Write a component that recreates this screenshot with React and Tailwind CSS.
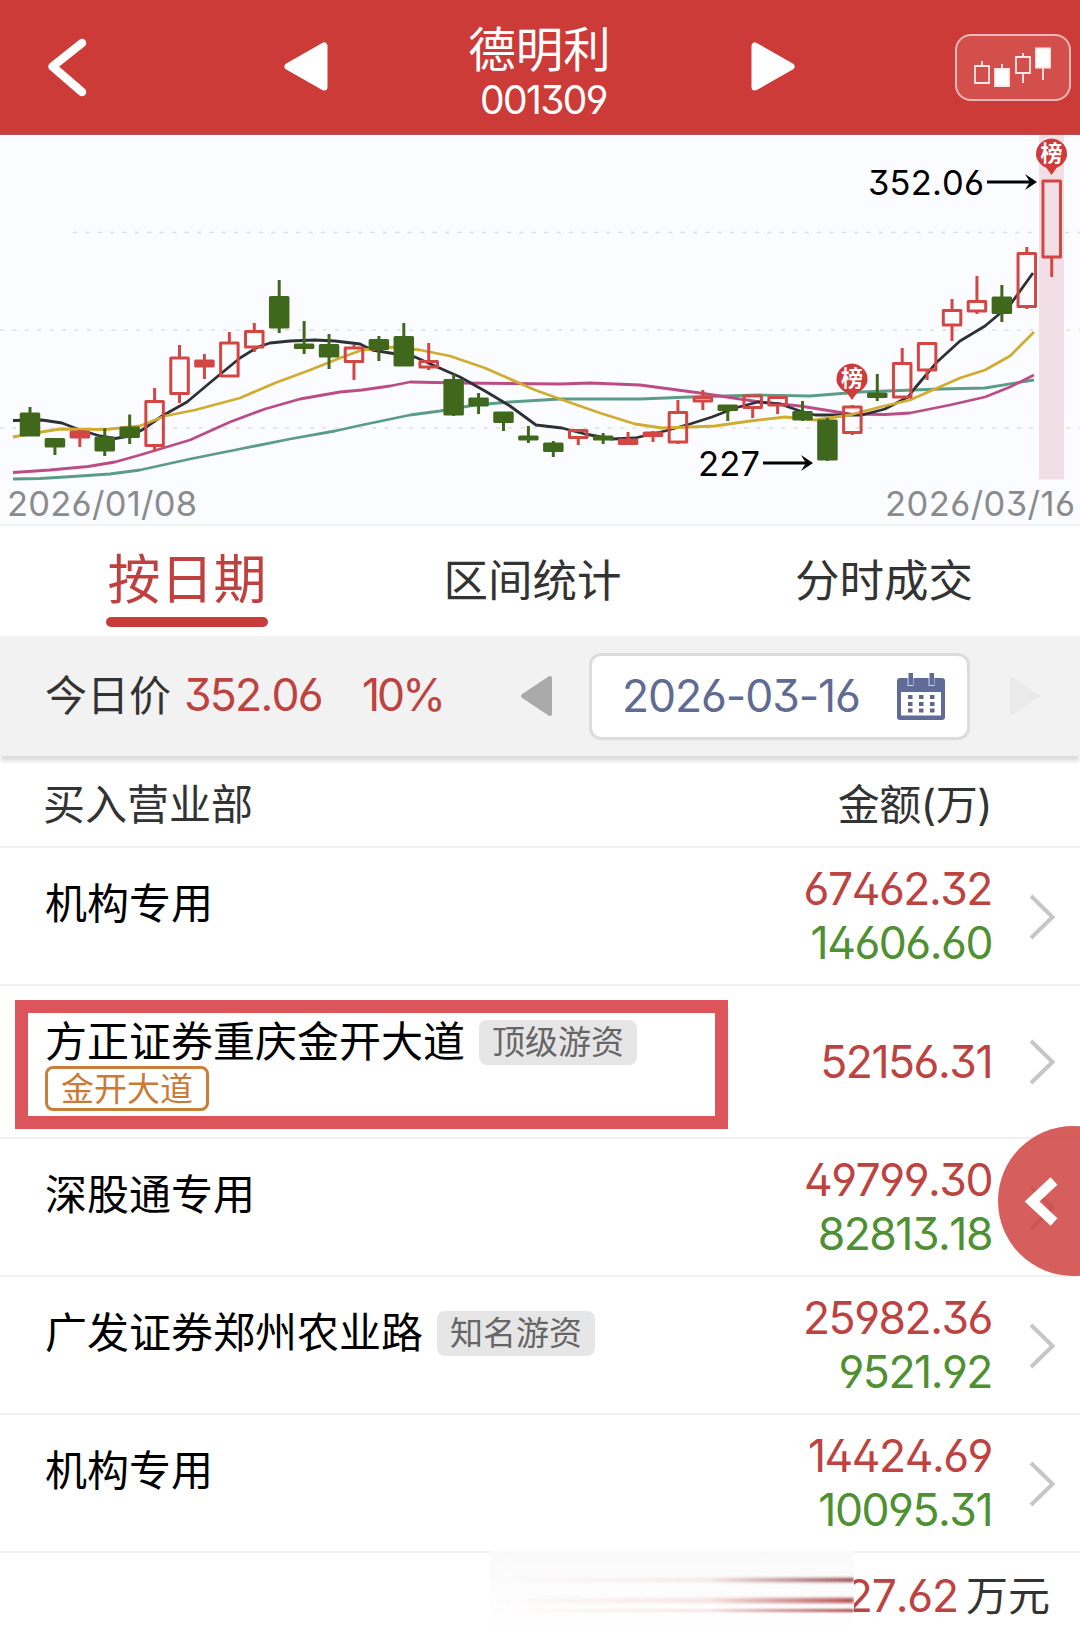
import React from "react";
import clsx from "clsx";

// high, open/close top, open/close bottom, low, type (g = down, r = up hollow, f = up filled)
const candles = [
  [407, 413, 435, 435, "g"],
  [438, 438.5, 446, 455, "g"],
  [430, 431, 437, 447, "f"],
  [428, 437, 450, 456, "g"],
  [414.5, 427, 436.5, 444, "g"],
  [388, 400.5, 445.5, 451, "r"],
  [345, 357, 393.5, 403, "r"],
  [354, 360, 366, 379, "f"],
  [332, 342, 376, 376, "r"],
  [323, 330.5, 347, 352, "r"],
  [280, 296.5, 327, 333, "g"],
  [321, 344, 347.5, 354, "g"],
  [334, 344.5, 356, 369, "g"],
  [345, 347, 361.5, 380, "r"],
  [336, 339.5, 348.5, 361, "g"],
  [323, 336.5, 365, 366, "g"],
  [343, 360.5, 367, 370, "r"],
  [374, 379.5, 414, 416, "g"],
  [393, 398, 405, 414, "g"],
  [412, 412, 421.5, 431, "g"],
  [426, 436, 439, 443, "g"],
  [441, 443, 450.5, 457, "g"],
  [429, 429.5, 437.5, 445, "r"],
  [433, 436, 439, 444, "g"],
  [432, 439, 443.5, 444, "f"],
  [431, 432, 435.5, 442, "f"],
  [400, 411.5, 442, 444, "r"],
  [390, 396.5, 401, 410, "r"],
  [405, 405, 409.5, 421, "g"],
  [395, 395, 407.5, 418, "r"],
  [396, 396.5, 405, 414, "r"],
  [401, 411.5, 419, 421, "g"],
  [418, 420, 459, 461, "g"],
  [405, 406, 432.5, 435, "r"],
  [374, 393, 396.5, 401, "g"],
  [348, 362.5, 397, 398, "r"],
  [342, 342.5, 370, 380, "r"],
  [299, 309.5, 325, 341, "r"],
  [276, 300.5, 311, 314, "r"],
  [285, 297, 312.5, 322, "g"],
  [247, 252.5, 306.5, 309, "r"],
  [180, 180, 257, 277, "r"],
];

const averages = [
  {
    color: "#5a9c88",
    points:
      "13,479 40,478.5 65,477 110,474 140,470 190,459 240,449 290,439 335,431 362,425 410,415 440,411 475,405 510,402 560,399 640,399 690,397 760,395 810,396 860,392 940,389 985,388 1034,380",
  },
  {
    color: "#bb4d86",
    points:
      "13,472.5 50,470 88,466.5 115,462 140,455 190,440 230,422 265,409 300,399 340,392 362,390 390,386 410,382 460,383 560,384 590,383 640,385 670,389 700,393 760,402 800,406 850,414 885,414.5 910,413 950,405 985,397 1010,387 1034,375",
  },
  {
    color: "#2f3036",
    points:
      "13,420.5 42,420 62,423 80,430 100,436 115,438.5 130,436 142,430 162,416 187,402 212,381 240,358 258,347 270,343 290,341 315,340 335,341 360,344 372,350 390,353 415,357 435,366 460,377 485,391 510,406 536,425 562,428 585,434 612,439 635,438 665,431 690,424 712,417 735,408 758,402 780,404 800,411 815,415 840,415 862,415 885,409 908,397 915,388 937,362 960,341 985,326 1010,305 1033,273",
  },
  {
    color: "#d0ac31",
    points:
      "13,437 35,433 60,429 105,429.5 140,426 165,416 195,410 240,398 275,383 310,370 340,358 362,350 395,347 420,350 450,356 485,368 535,390 560,399 600,413 635,424 662,428 690,427 715,426 750,421 785,417 815,420 850,415 880,407 910,400 935,389 960,378 985,370 1010,356 1034,332",
  },
];

const tabs = [
  { name: "按日期", active: true },
  { name: "区间统计", active: false },
  { name: "分时成交", active: false },
];

const rows = [
  { name: "机构专用", buy: "67462.32", sell: "14606.60" },
  {
    name: "方正证券重庆金开大道",
    tag: "顶级游资",
    alias: "金开大道",
    buy: "52156.31",
  },
  { name: "深股通专用", buy: "49799.30", sell: "82813.18" },
  { name: "广发证券郑州农业路", tag: "知名游资", buy: "25982.36", sell: "9521.92" },
  { name: "机构专用", buy: "14424.69", sell: "10095.31" },
];

const Candle = ({ index, data }) => {
  const [high, top, bottom, low, type] = data;
  const x = 30 + index * 24.92;
  const color = type === "g" ? "#40681d" : "#d24644";

  return (
    <g stroke={color} strokeWidth="3" strokeLinejoin="round">
      {high < top && <line x1={x} x2={x} y1={high} y2={top} />}
      {low > bottom && <line x1={x} x2={x} y1={bottom} y2={low} />}
      <rect
        x={x - 8.75}
        y={top + 1}
        width="17.5"
        height={Math.max(bottom - top - 1, 1)}
        fill={type === "r" ? "none" : color}
      />
    </g>
  );
};

const Pin = ({ x, y }) => (
  <g>
    <path
      d={`M${x - 15} ${y + 5}A15.5 15.5 0 1 1 ${x + 15} ${y + 5}Q${x + 12} ${y + 12} ${x + 5} ${y + 15}L${x} ${y + 22}L${x - 5} ${y + 15}Q${x - 12} ${y + 12} ${x - 15} ${y + 5}Z`}
      fill="#cd3b3b"
    />
    <text x={x} y={y + 7.5} textAnchor="middle" fontSize="22" fontWeight="700" fill="#fff">
      榜
    </text>
  </g>
);

const Arrow = ({ x, y }) => (
  <g stroke="#000" fill="none">
    <path d={`M${x} ${y}h46`} strokeWidth="3" />
    <path d={`M${x + 38} ${y - 8}L${x + 50} ${y}L${x + 38} ${y + 8}L${x + 43} ${y}Z`} fill="#000" stroke="none" />
  </g>
);

const Chart = () => (
  <svg viewBox="0 135 1080 389" className="block w-full h-[389px] bg-[#fbfcff]">
    <g stroke="#dddee1" strokeWidth="1.5" strokeDasharray="4 8.4">
      <line x1="73" x2="1080" y1="232.5" y2="232.5" />
      <line x1="0" x2="1080" y1="330" y2="330" />
      <line x1="0" x2="1080" y1="428" y2="428" />
    </g>
    <rect x="1039" y="135" width="25" height="344.5" fill="#f2dfe5" />
    {averages.map((line, k) => (
      <polyline
        key={k}
        points={line.points}
        fill="none"
        stroke={line.color}
        strokeWidth="2.8"
        strokeLinejoin="round"
      />
    ))}
    {candles.map((candle, k) => (
      <Candle key={k} index={k} data={candle} />
    ))}
    <Pin x={852} y={378} />
    <Pin x={1051.5} y={153} />
    <g fontSize="34.5" fill="#000">
      <text x="868" y="195" textLength="116" lengthAdjust="spacing">
        352.06
      </text>
      <text x="698" y="475.5" textLength="62" lengthAdjust="spacing">
        227
      </text>
    </g>
    <Arrow x={987} y={182} />
    <Arrow x={763} y={463} />
    <g fontSize="34.5" fill="#8b8b8d">
      <text x="7" y="515.5" textLength="190" lengthAdjust="spacing">
        2026/01/08
      </text>
      <text x="885" y="515.5" textLength="190" lengthAdjust="spacing">
        2026/03/16
      </text>
    </g>
  </svg>
);

const Header = () => (
  <header className="flex h-[135px] items-center bg-[#cd3b38] border-b border-[#b9504e] text-white">
    <svg className="ml-11 w-11 h-16" viewBox="0 0 44 64" fill="none">
      <path d="M38 8L8.500 31.500L38 57" stroke="#fff" strokeWidth="8.500" strokeLinecap="round" strokeLinejoin="round" />
    </svg>
    <svg className="ml-[194px] w-[48px] h-[52px]" viewBox="0 0 48 52">
      <path d="M42 5V46L6 25.5Z" fill="#fff" stroke="#fff" strokeWidth="7" strokeLinejoin="round" />
    </svg>
    <div className="flex flex-1 flex-col items-center pt-[9px]">
      <div className="text-[47.5px] leading-[57px]">德明利</div>
      <div className="text-[39px] leading-[44px] tracking-[-1.6px] pl-2">001309</div>
    </div>
    <svg className="mr-[158px] w-[48px] h-[52px]" viewBox="0 0 48 52">
      <path d="M6 5V46L42 25.5Z" fill="#fff" stroke="#fff" strokeWidth="7" strokeLinejoin="round" />
    </svg>
    <div className="mr-[9px] flex h-[67px] w-[116px] items-center justify-center rounded-2xl border-2 border-white/60 bg-white/10 pr-[3px]">
      <svg width="80" height="44" viewBox="972 45 80 44" fill="none" stroke="#ffe9e8" strokeWidth="1.8">
        <path d="M975 66h14v17h-14zM982 61v5" />
        <path d="M995 69h14v17h-14zM1002 64v5" fill="#fff" />
        <path d="M1016 57h14v16h-14zM1023 53v4M1023 73v10" />
        <path d="M1036 48.5h14v19h-14zM1043 67v13" fill="#fff" />
      </svg>
    </div>
  </header>
);

const CalendarIcon = () => (
  <svg className="w-12 h-[47px]" viewBox="0 0 48 47">
    <path
      fill="#5f6b98"
      fillRule="evenodd"
      d="M3 5h42a3 3 0 0 1 3 3v36a3 3 0 0 1-3 3H3a3 3 0 0 1-3-3V8a3 3 0 0 1 3-3zM4 19v23.5h40V19z"
    />
    <path fill="#d3d7e6" d="M10.500 5h6v8h-6zM31.500 5h6v8h-6z" />
    <path fill="#5f6b98" d="M11.500 0h4.500v12h-4.500zM32.500 0h4.500v12h-4.500z" />
    {[22, 29, 35.5].map((y) => (
      <path key={y} fill="#5d678c" d={`M11 ${y}h4.500v4h-4.500zM22 ${y}h4.500v4h-4.500zM33 ${y}h4.500v4h-4.500z`} />
    ))}
  </svg>
);

const Row = ({ row }) => (
  <div
    className={clsx(
      "relative flex border-b-2 border-[#f0f0f0] pb-0.5 pl-[45px] pr-6",
      row.alias ? "h-[153px]" : "h-[138px]"
    )}
  >
    <div className="flex-1 pt-[33px] text-[42px] leading-[46px] text-black">
      <div className="flex items-center">
        {row.name}
        {row.tag && (
          <span className="ml-[14px] h-[45px] rounded-lg bg-[#e6e6e6] px-[13px] text-[33px] leading-[44px] text-[#666]">
            {row.tag}
          </span>
        )}
      </div>
      {row.alias && (
        <span className="mt-px block h-[45px] w-[164px] rounded-lg border-3 border-[#cb7d3a] text-center text-[33px] leading-[41px] text-[#cb7a35]">
          {row.alias}
        </span>
      )}
    </div>
    <div className="flex flex-col justify-center pt-0.5 text-right text-[44.5px] leading-[54px] tracking-[-1.5px]">
      <div className="text-[#bd4341]">{row.buy}</div>
      {row.sell && <div className="text-[#4f9033]">{row.sell}</div>}
    </div>
    <svg className="ml-[37px] mt-[3px] w-[27px] self-center" viewBox="0 0 27 48" fill="none">
      <path d="M2 3L23.500 24L2 45" stroke="#c6c6c6" strokeWidth="4" />
    </svg>
    {row.alias && (
      <div className="pointer-events-none absolute left-[15px] top-[14px] h-[129px] w-[713px] border-[13px] border-[#db555a]" />
    )}
  </div>
);

const App = () => {
  return (
    <div className="relative h-[1632px] w-[1080px] overflow-hidden bg-white font-[Inter,'Noto_Sans_CJK_SC',sans-serif] [font-feature-settings:'ss01'] [font-kerning:none]">
      <Header />
      <Chart />

      <div className="flex h-28 border-t-2 border-[#eff2f5]">
        {tabs.map((tab, k) => (
          <div
            key={k}
            className={clsx(
              "flex flex-col items-center",
              k === 0 && "w-[374px]",
              k === 1 && "w-[317px]",
              k === 2 && "w-[386px]"
            )}
          >
            <div
              className={clsx(
                tab.active
                  ? "w-[162px] h-[101px] text-center text-[53px] leading-[109px] text-[#bf403e] relative"
                  : "text-[44.5px] leading-[110px] text-[#333]"
              )}
            >
              {tab.name}
              {tab.active && (
                <span className="absolute inset-x-0 bottom-0 h-[10px] rounded-full bg-[#c93c3c]" />
              )}
            </div>
          </div>
        ))}
      </div>

      <div className="relative flex h-[120px] items-center bg-[#f2f2f2] pl-[45px] shadow-[0_6px_4px_-1px_#dcdcdc]">
        <span className="-mt-0.5 w-[139px] text-[42px] text-[#333]">今日价</span>
        <span className="-mt-px w-[178px] text-[44.5px] tracking-[-1.8px] text-[#bd4341]">352.06</span>
        <span className="-mt-px w-[158px] text-[44.5px] tracking-[-3px] text-[#bd4341]">10%</span>
        <svg className="w-8 h-[42px]" viewBox="0 0 32 42">
          <path d="M30 3V39L3 21Z" fill="#aaa" stroke="#aaa" strokeWidth="4" strokeLinejoin="round" />
        </svg>
        <div className="ml-[37px] flex h-[87px] w-[381px] items-center justify-between rounded-xl border-3 border-[#dcdcdc] bg-white pl-[30px] pr-[22px]">
          <span className="text-[44.5px] tracking-[-1.1px] text-[#5f6b92]">2026-03-16</span>
          <CalendarIcon />
        </div>
        <svg className="ml-10 w-[31px] h-[42px]" viewBox="0 0 31 42">
          <path d="M0 1V41L31 21Z" fill="#eaeaea" />
        </svg>
      </div>

      <div className="flex h-[92px] items-center justify-between border-b-2 border-[#f0f0f0] pl-[43px] pr-[88px] pt-[7px] text-[42px] text-[#333]">
        <span>买入营业部</span>
        <span className="tracking-[-0.5px]">金额(万)</span>
      </div>

      {rows.map((row, k) => (
        <Row key={k} row={row} />
      ))}

      <div className="flex items-center justify-end pr-[30px] pt-1 text-[42px] leading-[78px] text-[#333]">
        <span className="mr-2 text-[44.5px] tracking-[-1.2px] text-[#bd4341]">27.62</span>
        万元
      </div>

      {/* streaks running into the first digit of the total */}
      <div className="absolute left-[490px] top-[1551px] h-[81px] w-[364px] overflow-hidden bg-gradient-to-b from-[#fafafa] to-white">
        <div className="mt-[27px] h-[4px] bg-gradient-to-r from-transparent via-[#d9757528] via-60% to-[#8e4547] blur-[1.5px]" />
        <div className="mt-[16px] h-[5px] bg-gradient-to-r from-transparent via-[#d9757530] via-60% to-[#b04a4c] blur-[1.5px]" />
        <div className="mt-[6px] h-[3px] bg-gradient-to-r from-transparent via-[#d9757530] via-60% to-[#a84648] blur-[1px]" />
      </div>

      <div className="absolute left-[998px] top-[1126px] h-[150px] w-[150px] rounded-full bg-[#cd3b38]/82">
        <svg className="absolute left-[26px] top-[50px]" width="36" height="52" viewBox="0 0 36 52" fill="none">
          <path d="M30 5L8 25.500L30 46" stroke="#fff" strokeWidth="10" />
        </svg>
      </div>
    </div>
  );
};

export default App;
